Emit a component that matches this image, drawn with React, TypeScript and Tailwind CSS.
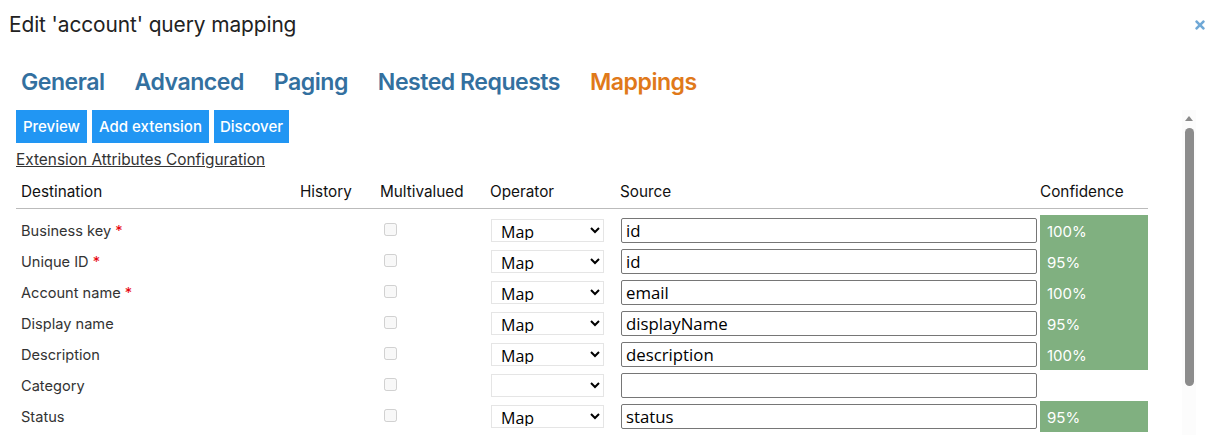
import { FaTimes } from 'react-icons/fa';

const font = "font-['Inter','Liberation_Sans',sans-serif]";

const rows = [
  { name: 'Business key', required: true, operator: 'Map', source: 'id', confidence: '100%' },
  { name: 'Unique ID', required: true, operator: 'Map', source: 'id', confidence: '95%' },
  { name: 'Account name', required: true, operator: 'Map', source: 'email', confidence: '100%' },
  { name: 'Display name', required: false, operator: 'Map', source: 'displayName', confidence: '95%' },
  { name: 'Description', required: false, operator: 'Map', source: 'description', confidence: '100%' },
  { name: 'Category', required: false, operator: '', source: '', confidence: '' },
  { name: 'Status', required: false, operator: 'Map', source: 'status', confidence: '95%' },
];

const tabs = ['General', 'Advanced', 'Paging', 'Nested Requests', 'Mappings'];

export default function App() {
  return (
    <div className={`h-[435px] w-[1217px] overflow-hidden bg-white ${font}`}>
      {/* Title */}
      <div className="flex h-[50px] items-center justify-between pl-[9px] pr-[10px]">
        <h1 className="text-[20.9px] font-normal tracking-[-0.1px] text-[#222]">Edit 'account' query mapping</h1>
        <FaTimes className="text-[#6fa8d6]" size={14} />
      </div>

      {/* Tabs */}
      <div className="flex h-[60px] items-center gap-[30px] pl-[21px] pt-[4px]">
        {tabs.map((t) => (
          <span
            key={t}
            className={`text-[23.1px] font-semibold tracking-[-0.5px] ${t === 'Mappings' ? 'text-[#e0791a]' : 'text-[#33709f]'}`}
          >
            {t}
          </span>
        ))}
      </div>

      <div className="flex">
        <div className="w-[1166px] shrink-0 pl-[16px]">
          {/* Actions */}
          <div className="flex gap-[5px]">
            <button className="h-[33px] w-[71px] bg-[#2196f3] pt-[2px] text-[15px] font-medium text-white">Preview</button>
            <button className="h-[33px] w-[117px] bg-[#2196f3] pt-[2px] text-[15px] font-medium text-white">Add extension</button>
            <button className="h-[33px] w-[75px] bg-[#2196f3] pt-[2px] text-[15px] font-medium text-white">Discover</button>
          </div>
          <div className="mt-[7px] h-[20px] text-[15.4px] leading-[20px] text-[#333] underline">
            Extension Attributes Configuration
          </div>

          {/* Mapping table */}
          <table className="mt-[10px] w-[1132px] table-fixed border-collapse">
            <colgroup>
              <col className="w-[284px]" />
              <col className="w-[80px]" />
              <col className="w-[110px]" />
              <col className="w-[130px]" />
              <col className="w-[420px]" />
              <col className="w-[108px]" />
            </colgroup>
            <thead>
              <tr className="h-[28px] border-b border-[#bbb] text-left text-[15.3px] text-[#111]">
                <th className="pb-[2px] pl-[5px] font-normal">Destination</th>
                <th className="pb-[2px] font-normal">History</th>
                <th className="pb-[2px] font-normal">Multivalued</th>
                <th className="pb-[2px] font-normal">Operator</th>
                <th className="pb-[2px] font-normal">Source</th>
                <th className="pb-[2px] font-normal">Confidence</th>
              </tr>
            </thead>
            <tbody>
              <tr className="h-[7px]">
                <td colSpan={6} />
              </tr>
              {rows.map((r) => (
                <tr key={r.name} className="h-[31px]">
                  <td className="pl-[5px] pt-[2px] text-[14.6px] text-[#333]">
                    {r.name}
                    {r.required && <span className="text-red-600"> *</span>}
                  </td>
                  <td />
                  <td className="pb-[2px] pl-[4px]">
                    <input type="checkbox" disabled className="block size-[13px]" />
                  </td>
                  <td>
                    <select
                      defaultValue={r.operator}
                      className="ml-[1px] block h-[23px] w-[113px] border border-[#e5e5e5] bg-white pb-[1px] pl-[5px] font-['Open_Sans',sans-serif] text-[16px] leading-[20px] text-black"
                    >
                      <option value=""></option>
                      <option value="Map">Map</option>
                    </select>
                  </td>
                  <td>
                    <input
                      readOnly
                      value={r.source}
                      className="ml-[1px] block h-[25px] w-[416px] rounded-[2px] border border-[#767676] px-[4px] font-['Open_Sans',sans-serif] text-[16.8px] text-black"
                    />
                  </td>
                  <td className={`pl-[7px] pt-[3px] text-[15px] text-white ${r.confidence ? 'bg-[#80b080]' : ''}`}>
                    {r.confidence}
                  </td>
                </tr>
              ))}
            </tbody>
          </table>
        </div>

        {/* Scrollbar */}
        <div className="ml-[16px] flex h-[325px] w-[14px] flex-col items-center bg-[#fcfcfc]">
          <svg width="10" height="8" viewBox="0 0 10 8" className="mt-[5px]">
            <path d="M5 1 L9 6 L1 6 Z" fill="#8a8a8a" />
          </svg>
          <div className="mt-[5px] h-[258px] w-[9px] rounded-[5px] bg-[#8c8c8c]" />
        </div>
      </div>
    </div>
  );
}
